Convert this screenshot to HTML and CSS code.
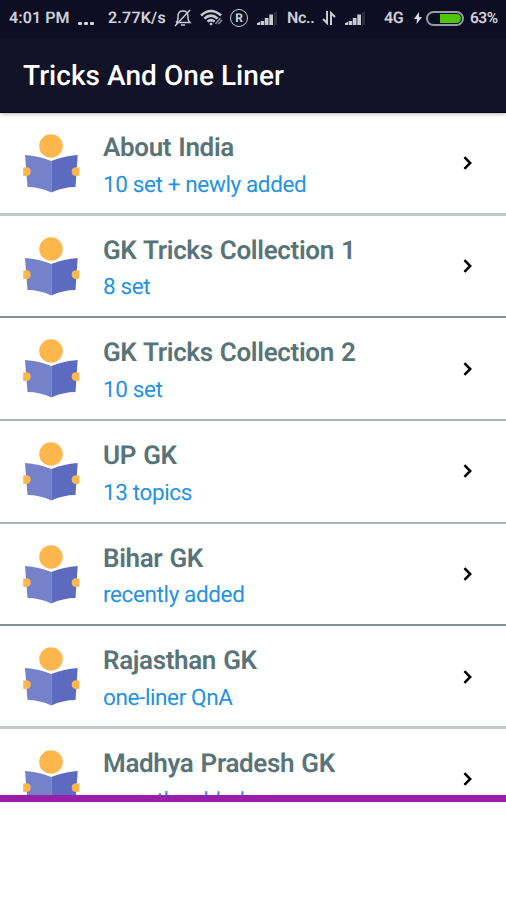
FILE: index.html
```html
<!DOCTYPE html>
<html lang="en">
<head>
<meta charset="utf-8">
<title>Tricks And One Liner</title>
<link rel="stylesheet" href="styles.css">
</head>
<body>
<svg class="defs" aria-hidden="true">
  <symbol id="reader" viewBox="0 0 58 60">
    <circle cx="28" cy="12" r="11.8" fill="#ffb74d"/>
    <path d="M2 21Q16 22 28.300 27V58.500Q17 53 4.500 53Z" fill="#7581c9"/>
    <path d="M54.700 21Q41 22 28.300 27V58.500Q40 53 52.500 53Z" fill="#5c6bc0"/>
    <path d="M.2 33.500Q7.700 32 7.700 37.500Q7.700 43 .2 41.800Z" fill="#ffb74d"/>
    <path d="M56.200 33.500Q48.700 32 48.700 37.500Q48.700 43 56.200 41.800Z" fill="#ffb74d"/>
  </symbol>
  <symbol id="chevron" viewBox="0 0 10 16">
    <path d="M1.400 2.200 7.200 8 1.400 13.800" fill="none" stroke="#000" stroke-width="2.500"/>
  </symbol>
  <symbol id="signal" viewBox="0 0 22 16">
    <path d="M0 15v-2l3-1v3zM3.600 15v-4h3.600v4zM7.800 15V8h3.700v7zM12.300 15V4.500h3.700V15z" fill="#c9c9d3"/>
    <path d="M17 15V2h3v13z" fill="#2c2c3d"/>
  </symbol>
</svg>
<header class="status">
  <span class="time">4:01 PM</span>
  <span class="dots"><i></i><i></i><i></i></span>
  <span class="speed">2.77K/s</span>
  <svg class="bell" viewBox="0 0 18 18" fill="none" stroke="#c9c9d3" stroke-width="1.500"><path d="M2 13.500h14q-2-2-2-4V7q0-5-5-5T4 7v3q0 2-2 3.500M7 16h4M1 17 16 1"/></svg>
  <svg class="wifi" viewBox="0 0 24 18" fill="none" stroke="#c9c9d3" stroke-width="2.500"><path d="M1 6.500Q11 -2.500 21 6.500M4.300 9.700Q11 3.500 17.700 9.700M7.500 12.700Q11 9.500 14.500 12.700"/><circle cx="11" cy="15" r="1" fill="#c9c9d3" stroke-width="1"/><path d="M15.500 15l5-6M18.500 15 22 11" stroke="#858590" stroke-width="1.700"/></svg>
  <span class="reg">R</span>
  <svg class="signal first"><use href="#signal"/></svg>
  <span class="carrier">Nc..</span>
  <svg class="arrows" viewBox="0 0 14 14" fill="none" stroke="#c9c9d3" stroke-width="2"><path d="M5 0v12L1 8M9 14V2l4 4"/></svg>
  <svg class="signal second"><use href="#signal"/></svg>
  <span class="net">4G</span>
  <svg class="bolt" viewBox="0 0 8 12"><path d="M5 0 0 7h3L2.500 12 8 5H5z" fill="#dedee5"/></svg>
  <span class="battery"><i></i></span>
  <span class="percent">63%</span>
</header>
<div class="appbar"><h1>Tricks And One Liner</h1></div>
<main class="list">
  <section class="row"><svg class="reader"><use href="#reader"/></svg><div class="text"><h2>About India</h2><p>10 set + newly added</p></div><svg class="chevron"><use href="#chevron"/></svg></section>
  <section class="row"><svg class="reader"><use href="#reader"/></svg><div class="text"><h2>GK Tricks Collection 1</h2><p>8 set</p></div><svg class="chevron"><use href="#chevron"/></svg></section>
  <section class="row"><svg class="reader"><use href="#reader"/></svg><div class="text"><h2>GK Tricks Collection 2</h2><p>10 set</p></div><svg class="chevron"><use href="#chevron"/></svg></section>
  <section class="row"><svg class="reader"><use href="#reader"/></svg><div class="text"><h2>UP GK</h2><p>13 topics</p></div><svg class="chevron"><use href="#chevron"/></svg></section>
  <section class="row"><svg class="reader"><use href="#reader"/></svg><div class="text"><h2>Bihar GK</h2><p>recently added</p></div><svg class="chevron"><use href="#chevron"/></svg></section>
  <section class="row"><svg class="reader"><use href="#reader"/></svg><div class="text"><h2>Rajasthan GK</h2><p>one-liner QnA</p></div><svg class="chevron"><use href="#chevron"/></svg></section>
  <section class="row"><svg class="reader"><use href="#reader"/></svg><div class="text"><h2>Madhya Pradesh GK</h2><p>recently added</p></div><svg class="chevron"><use href="#chevron"/></svg></section>
</main>
<footer class="banner"></footer>
</body>
</html>
```
FILE: styles.css
```css
* { box-sizing: border-box; }
body { margin: 0; height: 900px; overflow: hidden; background: #fff; font-family: Roboto, sans-serif; text-rendering: geometricPrecision; display: flex; flex-direction: column; }
h1, h2, p { margin: 0; white-space: nowrap; }
svg { flex: none; display: block; }
.defs { position: absolute; width: 0; height: 0; }
.status { height: 38px; flex: none; background: #0e0e23; color: #d0d0d9; display: flex; align-items: center; font-size: 16px; font-weight: 600; line-height: 36px; padding: 0 0 2px 9px; white-space: nowrap; }
.status > * { flex: none; }
.time { width: 69px; letter-spacing: .1px; }
.dots { width: 30px; display: flex; gap: 2px; padding-top: 11px; }
.dots i { width: 4px; height: 3px; border-radius: 1px; background: #d4d4dc; }
.speed { width: 65px; letter-spacing: .2px; }
.bell { width: 18px; height: 18px; margin-left: 1px; }
.wifi { width: 24px; height: 18px; margin-left: 8px; }
.reg { width: 18px; height: 18px; margin-left: 6px; border: 1.500px solid #c9c9d3; border-radius: 50%; font-size: 12px; font-weight: 700; line-height: 16px; text-align: center; }
.signal { width: 22px; height: 16px; }
.first { margin-left: 9px; }
.carrier { width: 29px; margin-left: 8px; letter-spacing: -.3px; }
.arrows { width: 14px; height: 14px; margin-left: 6px; }
.second { margin-left: 9px; }
.net { width: 21px; margin-left: 17px; letter-spacing: -.3px; }
.bolt { width: 8px; height: 12px; margin-left: 9px; }
.battery { width: 38px; height: 15px; margin-left: 4px; padding: 1px; border: 2px solid #9b9ba5; border-radius: 8px; display: flex; justify-content: flex-end; }
.battery i { width: 21px; height: 9px; background: #4fc400; border-radius: 0 5px 5px 0; }
.percent { margin-left: 6px; font-size: 15.500px; letter-spacing: -.5px; }
.appbar { height: 75px; flex: none; background: #131328; border-bottom: 1px solid #050510; box-shadow: 0 1px 4px rgba(0,0,0,.3); padding: 1px 0 0 23px; display: flex; align-items: center; z-index: 1; }
h1 { color: #fff; font-size: 28px; font-weight: 500; line-height: 73px; letter-spacing: .05px; }
.list { height: 682px; flex: none; overflow: hidden; }
.row { height: 102.700px; display: flex; align-items: flex-start; padding: 21px 33px 0 23px; border-bottom: 2px solid #a9b8b5; }
.row:first-child { border-bottom: 3px solid #bccac6; }
.row:nth-child(2), .row:nth-child(5) { border-bottom-color: #829491; }
.row:nth-child(6) { border-bottom: 3px solid #c4c8c7; }
.reader { width: 58px; height: 60px; }
.text { flex: 1; padding-left: 22px; }
h2 { font-size: 26px; font-weight: 600; line-height: 29px; color: #597478; letter-spacing: -.35px; word-spacing: 1px; }
p { font-size: 22.500px; line-height: 26px; margin-top: 8.500px; color: #2492df; letter-spacing: -.38px; }
.chevron { width: 10px; height: 16px; margin-top: 21.200px; }
.banner { height: 105px; border-top: 7px solid #9820a8; background: #fff; }
```
